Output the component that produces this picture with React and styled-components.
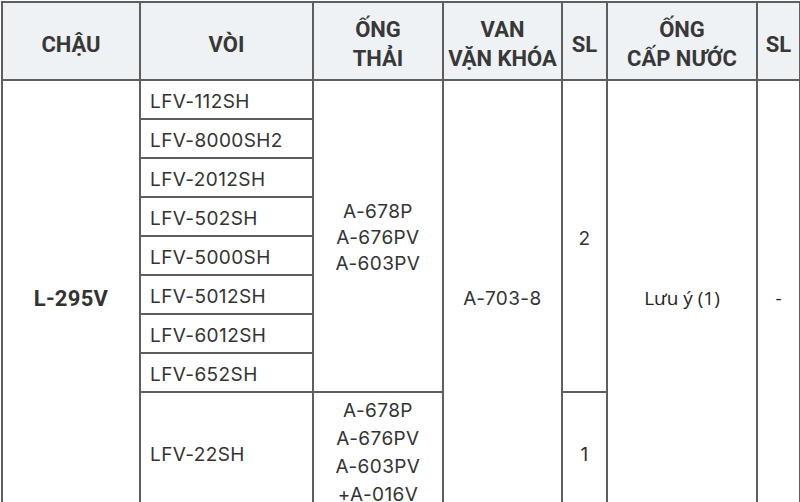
import React from "react";
import styled, { createGlobalStyle } from "styled-components";

const GlobalStyle = createGlobalStyle`
    html, body {
        margin: 0;
        padding: 0;
        background: #fff;
        overflow: hidden;
    }
`;

const Page = styled.div`
    width: 800px;
    height: 502px;
    overflow: hidden;
    padding: 1px 0 0 1px;
    box-sizing: border-box;
`;

const Table = styled.table`
    width: 798px;
    table-layout: fixed;
    border-collapse: collapse;
    border: 2px solid #5e5e5e;
    color: #333;
    font-family: Inter, "Liberation Sans", sans-serif;
`;

const Head = styled.th`
    height: 70px;
    padding: 6px 0 0;
    background: #eef2f4;
    border: 2px solid #5e5e5e;
    font-family: Roboto, "Liberation Sans", sans-serif;
    font-size: 22px;
    font-weight: 700;
    line-height: 29px;
    color: #383838;
    text-align: center;
    vertical-align: middle;
`;

const Cell = styled.td`
    height: ${(p) => p.$h || "33px"};
    padding: ${(p) => (p.$left ? "4px 0 0 9px" : `${p.$pt || "4px"} 0 0`)};
    border: 2px solid #5e5e5e;
    font-size: 19px;
    letter-spacing: 0.4px;
    line-height: ${(p) => p.$lh || "27px"};
    text-align: ${(p) => (p.$left ? "left" : "center")};
    vertical-align: middle;
    font-weight: 400;
    color: #333;
`;

const Basin = styled(Cell)`
    font-family: Roboto, "Liberation Sans", sans-serif;
    font-weight: 700;
    font-size: 22px;
    letter-spacing: 0.3px;
    color: #333;
`;

const Note = styled(Cell)`
    font-family: "Open Sans", "Liberation Sans", sans-serif;
    font-size: 19px;
    letter-spacing: 0;
    color: #1f1f1f;
`;

const faucets = [
    "LFV-112SH",
    "LFV-8000SH2",
    "LFV-2012SH",
    "LFV-502SH",
    "LFV-5000SH",
    "LFV-5012SH",
    "LFV-6012SH",
    "LFV-652SH",
];

function App() {
    return (
        <Page>
            <GlobalStyle />
            <Table>
                <colgroup>
                    <col style={{ width: 138 }} />
                    <col style={{ width: 173 }} />
                    <col style={{ width: 130 }} />
                    <col style={{ width: 119 }} />
                    <col style={{ width: 45 }} />
                    <col style={{ width: 150 }} />
                    <col style={{ width: 43 }} />
                </colgroup>
                <thead>
                    <tr>
                        <Head>CHẬU</Head>
                        <Head>VÒI</Head>
                        <Head>
                            ỐNG
                            <br />
                            THẢI
                        </Head>
                        <Head>
                            VAN
                            <br />
                            VẶN KHÓA
                        </Head>
                        <Head>SL</Head>
                        <Head>
                            ỐNG
                            <br />
                            CẤP NƯỚC
                        </Head>
                        <Head>SL</Head>
                    </tr>
                </thead>
                <tbody>
                    {faucets.map((f, i) => (
                        <tr key={f}>
                            {i === 0 && <Basin rowSpan={9}>L-295V</Basin>}
                            <Cell $left>{f}</Cell>
                            {i === 0 && (
                                <>
                                    <Cell rowSpan={8} $lh="26px">
                                        A-678P
                                        <br />
                                        A-676PV
                                        <br />
                                        A-603PV
                                    </Cell>
                                    <Cell rowSpan={9}>A-703-8</Cell>
                                    <Cell rowSpan={8}>2</Cell>
                                    <Note rowSpan={9}>Lưu ý (1)</Note>
                                    <Note rowSpan={9}>-</Note>
                                </>
                            )}
                        </tr>
                    ))}
                    <tr>
                        <Cell $left $h="115px">
                            LFV-22SH
                        </Cell>
                        <Cell $lh="28px" $pt="0">
                            A-678P
                            <br />
                            A-676PV
                            <br />
                            A-603PV
                            <br />
                            +A-016V
                        </Cell>
                        <Cell>1</Cell>
                    </tr>
                </tbody>
            </Table>
        </Page>
    );
}

export default App;
